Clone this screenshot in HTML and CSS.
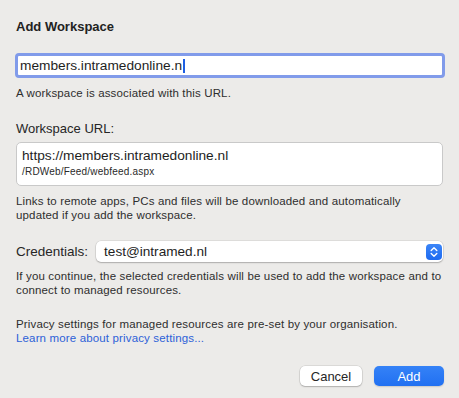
FILE: index.html
```html
<!DOCTYPE html>
<html>
<head>
    <meta charset="UTF-8">
    <meta name="viewport" content="width=device-width, initial-scale=1.0">
    <title>Add Workspace</title>
    <link rel="stylesheet" href="styles.css">
</head>
<body>
    <div class="sheet">
        <div class="sheet-title">Add Workspace</div>

        <div class="search-field">
            <span class="search-text">members.intramedonline.n</span><span class="caret"></span>
        </div>
        <div class="hint hint-first">A workspace is associated with this URL.</div>

        <div class="field-label">Workspace URL:</div>
        <div class="url-box">
            <div class="url-main">https://members.intramedonline.nl</div>
            <div class="url-path">/RDWeb/Feed/webfeed.aspx</div>
        </div>
        <div class="hint">Links to remote apps, PCs and files will be downloaded and automatically<br>updated if you add the workspace.</div>

        <div class="cred-row">
            <div class="cred-label">Credentials:</div>
            <div class="popup">
                <span class="popup-value">test@intramed.nl</span>
                <span class="stepper">
                    <svg width="16" height="16" viewBox="0 0 16 16">
                        <path d="M5.2 6.4 L8 3.8 L10.8 6.4" fill="none" stroke="#fff" stroke-width="1.4" stroke-linecap="round" stroke-linejoin="round"/>
                        <path d="M5.2 9.6 L8 12.2 L10.8 9.6" fill="none" stroke="#fff" stroke-width="1.4" stroke-linecap="round" stroke-linejoin="round"/>
                    </svg>
                </span>
            </div>
        </div>
        <div class="hint hint-cred">If you continue, the selected credentials will be used to add the workspace and to<br>connect to managed resources.</div>

        <div class="hint hint-privacy">Privacy settings for managed resources are pre-set by your organisation.<br><a class="link" href="#">Learn more about privacy settings...</a></div>

        <div class="buttons">
            <button class="btn">Cancel</button>
            <button class="btn btn-primary">Add</button>
        </div>
    </div>
</body>
</html>
```

FILE: styles.css
```css
* {
    box-sizing: border-box;
    margin: 0;
    padding: 0;
}

body {
    font-family: "Liberation Sans", Arial, sans-serif;
    background-color: #ecebe9;
    color: #262626;
    width: 459px;
    height: 398px;
    overflow: hidden;
}

.sheet {
    padding: 0 16px;
}

.sheet-title {
    margin-top: 19px;
    font-size: 13px;
    font-weight: bold;
    line-height: 16px;
    color: #222;
}

.search-field {
    margin: 18px -2px 0 -1px;
    height: 25px;
    background: white;
    border: 3px solid #819bea;
    border-radius: 4px;
    padding-left: 2px;
    display: flex;
    align-items: center;
}

.search-text {
    font-size: 13.7px;
    line-height: 16px;
    color: #1e1e1e;
}

.caret {
    width: 2px;
    height: 14px;
    margin-left: 1px;
    background: #1d5fe3;
}

.hint {
    font-size: 11.5px;
    letter-spacing: 0.15px;
    line-height: 14px;
    color: #2e2e2e;
    margin: 8px -8px 0 0;
    white-space: nowrap;
}

.field-label {
    margin-top: 21px;
    font-size: 13px;
    line-height: 16px;
}

.url-box {
    margin-top: 5px;
    height: 44px;
    background: white;
    border: 1px solid #c9c9c9;
    border-radius: 5px;
    padding: 4px 0 0 5px;
}

.url-main {
    font-size: 13.7px;
    line-height: 17px;
    color: #1e1e1e;
}

.url-path {
    font-size: 10px;
    letter-spacing: 0.2px;
    line-height: 15px;
    color: #2a2a2a;
}

.cred-row {
    margin-top: 19px;
    display: flex;
    align-items: center;
    gap: 8px;
}

.cred-label {
    font-size: 13.5px;
    line-height: 16px;
}

.popup {
    flex: 1;
    height: 21px;
    background: white;
    border-radius: 5px;
    box-shadow: 0 0 0 0.5px rgba(0,0,0,0.12), 0 1px 1.5px rgba(0,0,0,0.22);
    display: flex;
    align-items: center;
    justify-content: space-between;
    padding: 0 1px 0 8px;
}

.popup-value {
    font-size: 13.6px;
    line-height: 16px;
    color: #1e1e1e;
}

.stepper {
    width: 16px;
    height: 16px;
    border-radius: 4px;
    background: linear-gradient(#3b85f7, #1f6bf0);
    display: flex;
}

.hint-cred {
    margin-top: 7px;
}

.hint-privacy {
    margin-top: 20px;
}

.link {
    color: #2c61d8;
    text-decoration: none;
}

.buttons {
    margin: 21px -1px 0 0;
    display: flex;
    justify-content: flex-end;
    gap: 12px;
}

.btn {
    font-family: "Liberation Sans", Arial, sans-serif;
    font-size: 13px;
    height: 20px;
    width: 62px;
    border: none;
    border-radius: 5px;
    background: white;
    color: #262626;
    box-shadow: 0 0 0 0.5px rgba(0,0,0,0.14), 0 1px 1.5px rgba(0,0,0,0.2);
}

.btn-primary {
    width: 70px;
    color: white;
    background: linear-gradient(#3582f7, #2170f1);
    box-shadow: 0 1px 1.5px rgba(0,0,0,0.15);
}
```
